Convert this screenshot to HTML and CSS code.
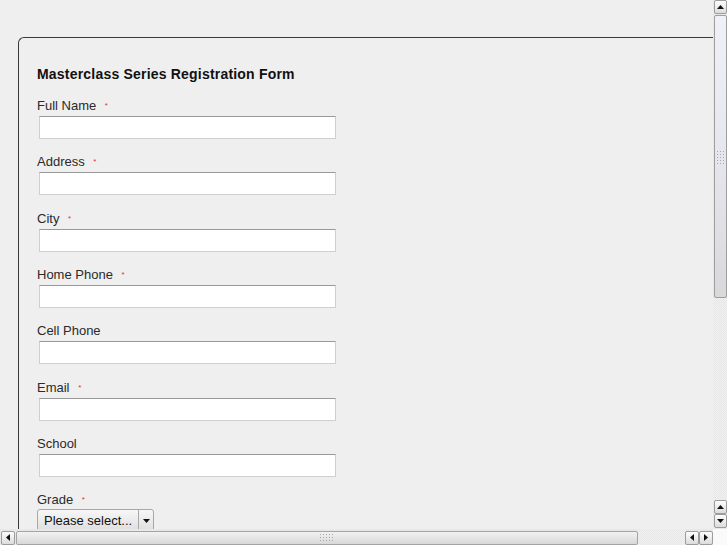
FILE: index.html
```html
<!DOCTYPE html>
<html lang="en">
<head>
  <meta charset="UTF-8">
  <title>Masterclass Series Registration Form</title>
  <link rel="stylesheet" href="styles.css">
</head>
<body>

  <div class="window">
    <!-- Page viewport -->
    <div class="viewport">
      <div class="form-box">
        <h2>Masterclass Series Registration Form</h2>

        <div class="field">
          <label>Full Name <span class="req">*</span></label>
          <input type="text">
        </div>
        <div class="field">
          <label>Address <span class="req">*</span></label>
          <input type="text">
        </div>
        <div class="field">
          <label>City <span class="req">*</span></label>
          <input type="text">
        </div>
        <div class="field">
          <label>Home Phone <span class="req">*</span></label>
          <input type="text">
        </div>
        <div class="field">
          <label>Cell Phone</label>
          <input type="text">
        </div>
        <div class="field">
          <label>Email <span class="req">*</span></label>
          <input type="text">
        </div>
        <div class="field">
          <label>School</label>
          <input type="text">
        </div>
        <div class="field">
          <label>Grade <span class="req">*</span></label>
          <div class="select">
            <span class="select-text">Please select...</span>
            <span class="select-arrow">
              <svg width="7" height="4" viewBox="0 0 7 4"><path d="M0 0h7L3.5 4z" fill="#111"/></svg>
            </span>
          </div>
        </div>
      </div>
    </div>

    <!-- Vertical scrollbar -->
    <div class="vbar">
      <div class="sb-btn">
        <svg width="7" height="4" viewBox="0 0 7 4"><path d="M0 4h7L3.5 0z" fill="#111"/></svg>
      </div>
      <div class="vthumb"><span class="grip vgrip"></span></div>
      <div class="trough"></div>
      <div class="sb-btn">
        <svg width="7" height="4" viewBox="0 0 7 4"><path d="M0 4h7L3.5 0z" fill="#111"/></svg>
      </div>
      <div class="sb-btn">
        <svg width="7" height="4" viewBox="0 0 7 4"><path d="M0 0h7L3.5 4z" fill="#111"/></svg>
      </div>
    </div>

    <!-- Horizontal scrollbar -->
    <div class="hbar">
      <div class="sb-btn">
        <svg width="4" height="7" viewBox="0 0 4 7"><path d="M4 0v7L0 3.5z" fill="#111"/></svg>
      </div>
      <div class="hthumb"><span class="grip hgrip"></span></div>
      <div class="trough"></div>
      <div class="sb-btn">
        <svg width="4" height="7" viewBox="0 0 4 7"><path d="M4 0v7L0 3.5z" fill="#111"/></svg>
      </div>
      <div class="sb-btn">
        <svg width="4" height="7" viewBox="0 0 4 7"><path d="M0 0v7L4 3.5z" fill="#111"/></svg>
      </div>
    </div>
    <div class="corner"></div>
  </div>

</body>
</html>
```

FILE: styles.css
```css
body {
  margin: 0;
  padding: 0;
  font-family: "Liberation Sans", Arial, sans-serif;
  background: #efefef;
  overflow: hidden;
}

.window {
  display: grid;
  grid-template-columns: 713px 14px;
  grid-template-rows: 529px 16px;
  width: 727px;
  height: 545px;
}

/* Page content */
.viewport {
  overflow: hidden;
  background: #efefef;
}

.form-box {
  margin: 37px 0 0 18px;
  width: 760px;
  border: 1px solid #3a3a3a;
  border-right: none;
  border-radius: 6px 0 0 0;
  padding: 26px 0 0 18px;
  height: 600px;
  box-sizing: border-box;
}

.form-box h2 {
  margin: 0 0 14px;
  font-size: 14px;
  line-height: 20px;
  font-weight: bold;
  letter-spacing: 0.2px;
  color: #111;
}

.field {
  margin-bottom: 15.33px;
}

.field label {
  display: block;
  font-size: 13px;
  line-height: 16px;
  color: #2a2a2a;
  margin-bottom: 2px;
}

.req {
  color: #e03030;
  font-size: 8px;
  margin-left: 5px;
  vertical-align: 2px;
}

.field input {
  display: block;
  margin: 0 0 0 2px;
  width: 297px;
  height: 23px;
  box-sizing: border-box;
  background: #fff;
  border: 1px solid #cfcfcf;
  border-top-color: #999;
  border-radius: 0;
  padding: 0 4px;
  font-size: 13px;
  outline: none;
}

.select {
  display: inline-flex;
  align-items: stretch;
  height: 23px;
  width: 117px;
  box-sizing: border-box;
  border: 1px solid #a8a8a8;
  border-radius: 3px;
  background: linear-gradient(#f7f7f7, #dedede);
  font-size: 13px;
  color: #111;
  margin-top: -1px;
}

.select-text {
  flex: 1;
  padding-left: 6px;
  line-height: 21px;
}

.select-arrow {
  width: 14px;
  border-left: 1px solid #a8a8a8;
  display: flex;
  align-items: center;
  justify-content: center;
}

/* Scrollbars */
.vbar {
  display: flex;
  flex-direction: column;
  background: #e8e8e8;
  padding-bottom: 1px;
}

.hbar {
  display: flex;
  align-items: center;
  background: #e8e8e8;
  padding-left: 1px;
}

.trough {
  flex: 1;
  background-color: #f2f2f2;
  background-image: linear-gradient(45deg, #e6e6e6 25%, transparent 25%, transparent 75%, #e6e6e6 75%),
    linear-gradient(45deg, #e6e6e6 25%, transparent 25%, transparent 75%, #e6e6e6 75%);
  background-size: 2px 2px;
  background-position: 0 0, 1px 1px;
  align-self: stretch;
}

.sb-btn {
  width: 14px;
  height: 14px;
  box-sizing: border-box;
  border: 1px solid #9c9c9c;
  border-radius: 2px;
  background: linear-gradient(#fdfdfd, #dcdcdc);
  display: flex;
  align-items: center;
  justify-content: center;
  flex-shrink: 0;
}

.vbar .sb-btn {
  width: 13px;
  margin-left: 1px;
}

.hbar .sb-btn {
  margin-top: 1px;
}

.vthumb {
  height: 283px;
  margin: 1px 0 0 1px;
  box-sizing: border-box;
  border: 1px solid #9e9e9e;
  border-radius: 2px;
  background: linear-gradient(#f0f0f8 0%, #e6e6ee 50%, #d9d9dc 100%);
  display: flex;
  justify-content: center;
  padding-top: 134px;
}

.hthumb {
  width: 622px;
  height: 14px;
  margin: 1px 0 0 1px;
  box-sizing: border-box;
  border: 1px solid #a4a4a4;
  border-radius: 2px;
  background: linear-gradient(#f2f2f2, #d8d8d8);
  display: flex;
  align-items: center;
  padding-left: 302px;
}

.grip {
  display: block;
  background-image: radial-gradient(circle, #a8a8a8 0.7px, transparent 0.9px);
  background-size: 3px 3px;
}

.vgrip {
  width: 9px;
  height: 15px;
}

.hgrip {
  width: 15px;
  height: 9px;
}

.corner {
  background: #fafafa;
}
```
